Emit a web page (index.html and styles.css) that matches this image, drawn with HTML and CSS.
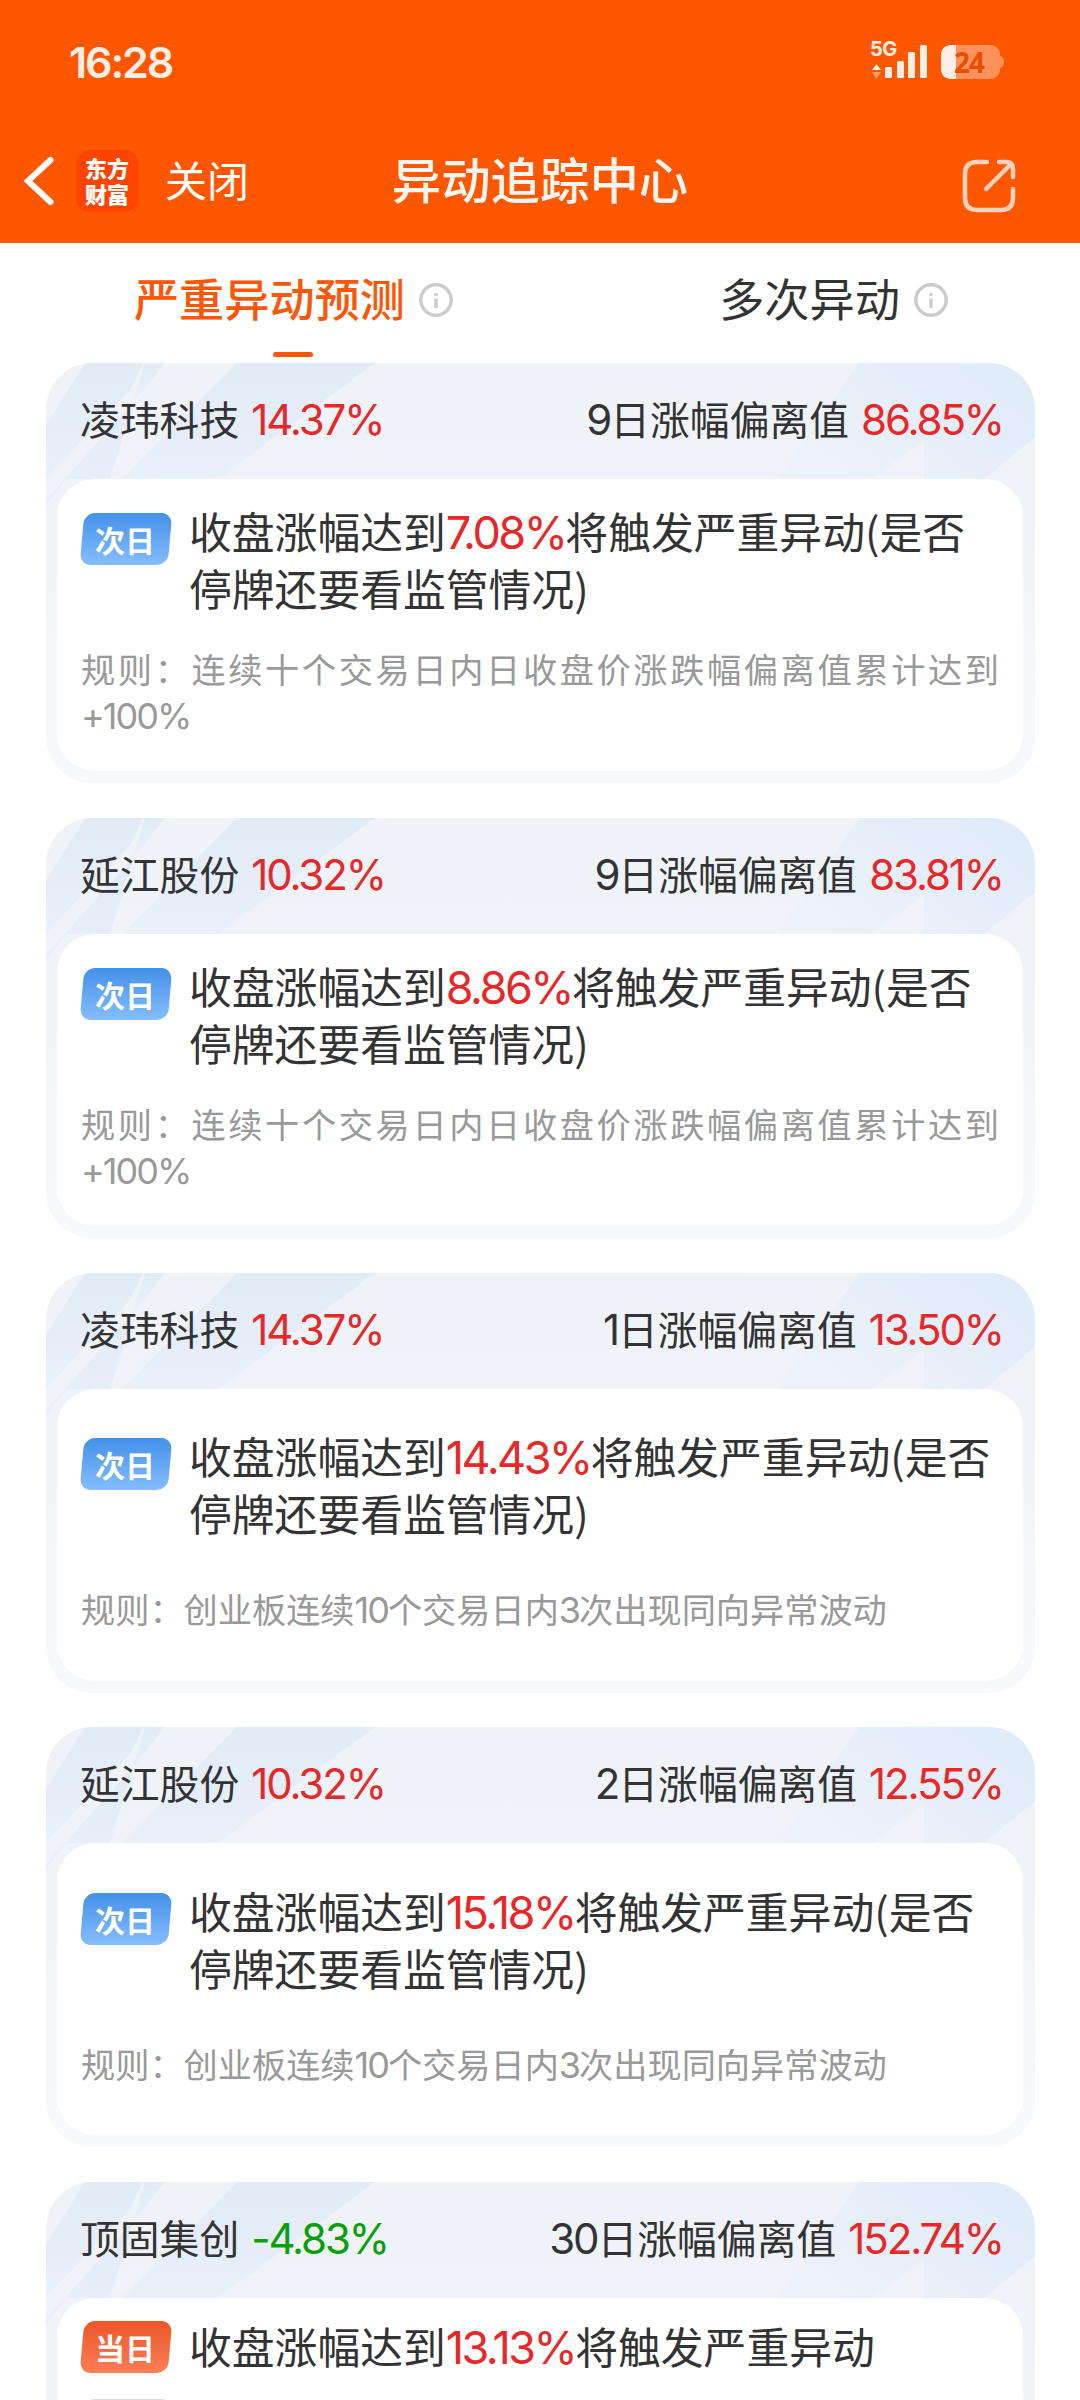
FILE: index.html
```
<!DOCTYPE html>
<html lang="zh-CN">
<head>
  <meta charset="UTF-8">
  <meta name="viewport" content="width=device-width, initial-scale=1.0">
  <title>异动追踪中心</title>
  <link rel="stylesheet" href="styles.css">
</head>
<body>
  <!-- shared card header artwork -->
  <svg class="defs" width="0" height="0">
    <defs>
      <linearGradient id="streak" x1="0" y1="0" x2="0" y2="1">
        <stop offset="0" stop-color="#e1ebf6"/><stop offset="1" stop-color="#e8f0fa"/>
      </linearGradient>
      <linearGradient id="corner" x1="1" y1="0" x2="0" y2="0.6">
        <stop offset="0" stop-color="#dfebf9"/><stop offset="0.5" stop-color="#e5eef9"/><stop offset="1" stop-color="#ecf2f9"/>
      </linearGradient>
    </defs>
    <symbol id="streaks" viewBox="0 0 989 150">
      <path fill="url(#streak)" d="M39 0H97L84 27L0 115V62Z"/>
      <path fill="url(#streak)" d="M99 0H119L87 40Z"/>
      <path fill="url(#streak)" d="M87 40L64 116H20L0 142V137Z"/>
      <path fill="url(#streak)" d="M191 0H329L172 116H76Z"/>
      <path fill="url(#corner)" d="M813 0H989V74L938 116H878V77L826 116H732Z"/>
    </symbol>
  </svg>

  <header>
    <div class="status-bar">
      <span class="time">16:28</span>
      <div class="status-icons">
        <div class="signal">
          <span class="net">5G</span>
          <svg width="58" height="40" viewBox="0 0 58 40" fill="#fff" fill-opacity=".9">
            <path d="M2 31L6.5 25L11 31Z"/>
            <path d="M2 33H11L6.5 40Z" fill-opacity=".4"/>
            <rect x="15" y="28" width="7" height="11" rx="1.5"/>
            <rect x="27" y="22" width="7" height="17" rx="1.5"/>
            <rect x="38" y="13" width="7" height="26" rx="1.5"/>
            <rect x="50" y="6" width="7" height="33" rx="1.5"/>
          </svg>
        </div>
        <div class="battery">
          <svg width="64" height="34" viewBox="0 0 64 34">
            <path d="M11 0H48Q57 0 59 8V11Q63 12 63 17T59 23V26Q57 34 48 34H11Q0 34 0 23V11Q0 0 11 0Z" fill="#ff915a"/>
            <path d="M15 0V34H11Q0 34 0 23V11Q0 0 11 0Z" fill="#ffeee5"/>
          </svg>
          <span class="level">24</span>
        </div>
      </div>
    </div>
    <nav class="nav-bar">
      <div class="nav-left">
        <svg width="33" height="54" viewBox="0 0 33 54" fill="none" stroke="#fff" stroke-width="6" stroke-linecap="round">
          <path d="M28.500 6L6 27L28.500 48"/>
        </svg>
        <div class="logo"><span>东方</span><span>财富</span></div>
        <span class="close">关闭</span>
      </div>
      <h1>异动追踪中心</h1>
      <svg class="share" width="54" height="54" viewBox="0 0 54 54" fill="none" stroke="#ffd2bd" stroke-width="4.500" stroke-linecap="round">
        <path d="M25 3H15Q3 3 3 15V39Q3 51 15 51H39Q51 51 51 39V30"/>
        <path d="M37 3H44Q51 3 51 10V18M49 5L24 30"/>
      </svg>
    </nav>
  </header>

  <div class="tabs">
    <div class="tab active"><span>严重异动预测</span>
      <svg class="info" viewBox="0 0 34 34"><circle cx="17" cy="17" r="15.2"/><path d="M17 10V13M17 15.500V25"/></svg>
    </div>
    <div class="tab"><span>多次异动</span>
      <svg class="info" viewBox="0 0 34 34"><circle cx="17" cy="17" r="15.2"/><path d="M17 10V13M17 15.500V25"/></svg>
    </div>
  </div>

  <main>
    <section class="card">
      <svg class="art"><use href="#streaks"/></svg>
      <div class="card-head">
        <p>凌玮科技<b class="num up">14.37%</b></p>
        <p><span class="num">9</span>日涨幅偏离值<b class="num up">86.85%</b></p>
      </div>
      <div class="card-body">
        <div class="forecast">
          <span class="badge next"><i>次日</i></span>
          <p>收盘涨幅达到<b class="num up">7.08%</b>将触发严重异动(是否<br>停牌还要看监管情况)</p>
        </div>
        <p class="rule">规则：连续十个交易日内日收盘价涨跌幅偏离值累计达到<span class="num">+100%</span></p>
      </div>
    </section>

    <section class="card">
      <svg class="art"><use href="#streaks"/></svg>
      <div class="card-head">
        <p>延江股份<b class="num up">10.32%</b></p>
        <p><span class="num">9</span>日涨幅偏离值<b class="num up">83.81%</b></p>
      </div>
      <div class="card-body">
        <div class="forecast">
          <span class="badge next"><i>次日</i></span>
          <p>收盘涨幅达到<b class="num up">8.86%</b>将触发严重异动(是否<br>停牌还要看监管情况)</p>
        </div>
        <p class="rule">规则：连续十个交易日内日收盘价涨跌幅偏离值累计达到<span class="num">+100%</span></p>
      </div>
    </section>

    <section class="card">
      <svg class="art"><use href="#streaks"/></svg>
      <div class="card-head">
        <p>凌玮科技<b class="num up">14.37%</b></p>
        <p><span class="num">1</span>日涨幅偏离值<b class="num up">13.50%</b></p>
      </div>
      <div class="card-body">
        <div class="forecast">
          <span class="badge next"><i>次日</i></span>
          <p>收盘涨幅达到<b class="num up">14.43%</b>将触发严重异动(是否<br>停牌还要看监管情况)</p>
        </div>
        <p class="rule">规则：创业板连续<span class="num">10</span>个交易日内<span class="num">3</span>次出现同向异常波动</p>
      </div>
    </section>

    <section class="card">
      <svg class="art"><use href="#streaks"/></svg>
      <div class="card-head">
        <p>延江股份<b class="num up">10.32%</b></p>
        <p><span class="num">2</span>日涨幅偏离值<b class="num up">12.55%</b></p>
      </div>
      <div class="card-body">
        <div class="forecast">
          <span class="badge next"><i>次日</i></span>
          <p>收盘涨幅达到<b class="num up">15.18%</b>将触发严重异动(是否<br>停牌还要看监管情况)</p>
        </div>
        <p class="rule">规则：创业板连续<span class="num">10</span>个交易日内<span class="num">3</span>次出现同向异常波动</p>
      </div>
    </section>

    <section class="card">
      <svg class="art"><use href="#streaks"/></svg>
      <div class="card-head">
        <p>顶固集创<b class="num down">-4.83%</b></p>
        <p><span class="num">30</span>日涨幅偏离值<b class="num up">152.74%</b></p>
      </div>
      <div class="card-body multi">
        <div class="forecast">
          <span class="badge today"><i>当日</i></span>
          <p>收盘涨幅达到<b class="num up">13.13%</b>将触发严重异动</p>
        </div>
        <div class="forecast">
          <span class="badge later"></span>
        </div>
      </div>
    </section>
  </main>
</body>
</html>
```
FILE: styles.css
```
* { box-sizing: border-box; }
html { height: 2400px; overflow: hidden; }
body { margin: 0; height: 2400px; overflow: hidden; background: #fff; color: #333;
  display: flex; flex-direction: column; font-family: "Noto Sans CJK SC", sans-serif; }
h1, p { margin: 0; font-weight: 400; }
svg { display: block; flex: none; }
.defs { position: absolute; }

.num { font-family: Inter, "Noto Sans CJK SC", sans-serif; font-weight: 400; line-height: 1; }
.up { color: #e62828; }
.down { color: #0a9f0a; }

/* header */
header { flex: none; height: 243px; background: #ff5700; color: #fff; }
.status-bar { display: flex; justify-content: space-between; height: 125px;
  padding: 38px 75px 0 69px; }
.time { font: 600 43px/48px Inter, sans-serif; letter-spacing: -2.1px; color: #ffeee5; }
.status-icons { display: flex; align-items: flex-start; gap: 13px; padding-top: 1px; }
.signal, .battery { position: relative; }
.battery { margin-top: 6px; }
.net { position: absolute; left: 0; top: -2px; font: 700 20px/24px Inter, sans-serif;
  letter-spacing: -0.5px; color: #ffeee5; }
.level { position: absolute; left: 13px; top: 0; font: 700 28px/34px "Noto Sans", sans-serif;
  letter-spacing: -1px; color: #e84e00; }
.nav-bar { display: grid; grid-template-columns: 1fr auto 1fr; align-items: center;
  height: 112px; padding: 0 64px 0 22px; }
.nav-left { display: flex; align-items: center; }
.logo { display: flex; flex-direction: column; align-items: center; width: 62px; height: 62px;
  margin: 0 27px 0 21px; padding-top: 5px; border-radius: 14px;
  background: #ff4400; font-size: 22px; font-weight: 900; line-height: 25.5px; }
.close { font-size: 42px; line-height: 60px; margin-top: -5px; }
h1 { font-size: 49.4px; font-weight: 500; line-height: 60px; margin: -6px 0 0 42px; color: #fff6f1; }
.share { justify-self: end; margin-top: 10px; }

/* tabs */
.tabs { flex: none; display: grid; grid-template-columns: 1fr 1fr; height: 120px; }
.tab { position: relative; display: flex; justify-content: center; align-items: center; gap: 14px;
  height: 114px; padding-left: 47px; font-size: 45.2px; line-height: 60px; }
.tab span { margin-top: -5px; }
.tab.active { color: #f9580a; font-weight: 500; }
.tab.active::after { content: ""; position: absolute; left: 273px; bottom: 0;
  width: 40px; height: 5px; border-radius: 3px; background: #f9580a; }
.info { width: 34px; height: 34px; fill: none; stroke: #ccc; stroke-width: 3.4; }

/* cards */
main { flex: 1; min-height: 0; overflow: hidden; display: flex; flex-direction: column;
  gap: 34.75px; padding: 0 45.5px; }
.card { position: relative; flex: none; height: 420px; padding: 0 11.5px 12px; border-radius: 46px;
  overflow: hidden; background: linear-gradient(#eff3f8, #f0f3f9 40%, #f8f9fc); }
.art { position: absolute; left: 0; top: 0; width: 989px; height: 150px; }
.card-head { position: relative; display: flex; justify-content: space-between; align-items: center;
  height: 116px; padding: 0 20px 6px 23px; font-size: 39.8px; line-height: 60px; }
.card-head .num { font-size: 42px; letter-spacing: -2.1px; }
.card-head .up, .card-head .down { margin-left: 12px; }
.card-body { position: relative; display: flex; flex-direction: column; justify-content: space-evenly;
  height: 292px; padding: 0 24px 8px; border-radius: 38px; background: #fff; }
.card-body.multi { justify-content: flex-start; gap: 26px; padding-top: 23px; }
.forecast { display: flex; gap: 20px; font-size: 42.8px; line-height: 57px; white-space: nowrap; }
.forecast p { margin: -3px 0 3px; }
.forecast .num { font-size: 45px; letter-spacing: -2.5px; }
.badge { position: relative; flex: none; width: 88px; height: 52px; margin-top: 8px;
  display: flex; justify-content: center; align-items: center; color: #fff; }
.badge::before { content: ""; position: absolute; inset: 0 -1px 0 1px; border-radius: 11px;
  transform: skewX(-5deg); background: linear-gradient(#4491e8, #85bdff); }
.badge i { position: relative; font-style: normal; font-size: 30px; font-weight: 700; line-height: 50px; }
.multi .forecast { height: 52px; }
.multi .forecast p { margin-top: -4px; }
.multi .badge { margin-top: 0; }
.badge.today::before { background: linear-gradient(#eb5629, #fd7e57); }
.badge.later::before { background: linear-gradient(#d9dde0, #c5cace); }
.rule { font-size: 34.2px; line-height: 46px; color: #999; text-align: justify; }
.rule .num { font-size: 36px; letter-spacing: -2px; }
```
